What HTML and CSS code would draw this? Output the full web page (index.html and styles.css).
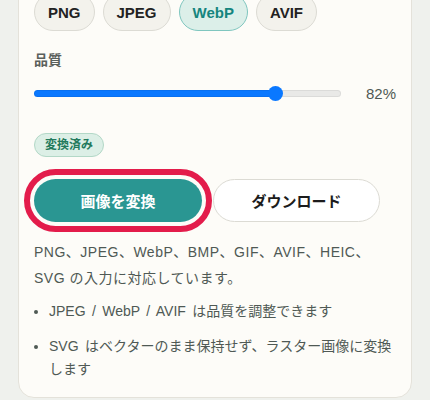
FILE: index.html
```html
<!DOCTYPE html>
<html lang="ja">
<head>
    <meta charset="UTF-8">
    <meta name="viewport" content="width=device-width, initial-scale=1.0">
    <title>画像変換</title>
    <link rel="stylesheet" href="styles.css">
</head>
<body>
    <div class="panel">
        <div class="formats">
            <button class="chip">PNG</button>
            <button class="chip">JPEG</button>
            <button class="chip active">WebP</button>
            <button class="chip">AVIF</button>
        </div>

        <div class="quality">
            <label class="field-label" for="quality">品質</label>
            <div class="slider-row">
                <input type="range" id="quality" min="10" max="100" value="82" style="--fill: 79%">
                <span class="slider-value">82%</span>
            </div>
        </div>

        <span class="badge">変換済み</span>

        <div class="actions">
            <button class="btn btn-primary">画像を変換</button>
            <button class="btn btn-secondary">ダウンロード</button>
        </div>

        <p class="note">PNG、JPEG、WebP、BMP、GIF、AVIF、HEIC、SVG の入力に対応しています。</p>
        <ul class="hints">
            <li>JPEG / WebP / AVIF は品質を調整できます</li>
            <li>SVG はベクターのまま保持せず、ラスター画像に変換します</li>
        </ul>
    </div>
</body>
</html>
```

FILE: styles.css
```css
/* ベース */
html, body {
    margin: 0;
    padding: 0;
}

body {
    background: #eff1ed;
    font-family: "Liberation Sans", "Noto Sans CJK JP", sans-serif;
    color: #4f5954;
    overflow: hidden;
}

/* カード */
.panel {
    width: 394px;
    box-sizing: border-box;
    margin: -30px 0 0 18px;
    padding: 22px 15px 16px 15px;
    background: #fdfcf8;
    border: 1px solid #e4e2da;
    border-radius: 0 0 16px 16px;
}

/* 形式の選択 */
.formats {
    display: flex;
    gap: 8px;
}

.chip {
    height: 38px;
    padding: 0 13px;
    font-family: inherit;
    font-size: 15px;
    font-weight: bold;
    color: #222;
    background: #f3f2ec;
    border: 1px solid #dcdbd4;
    border-radius: 19px;
}

.chip.active {
    color: #15857e;
    background: #dcefe9;
    border-color: #7fc6bf;
}

/* 品質 */
.quality {
    margin-top: 20px;
}

.field-label {
    display: block;
    font-size: 14px;
    font-weight: bold;
    line-height: 18px;
    color: #5a605c;
}

.slider-row {
    display: flex;
    align-items: center;
    height: 22px;
    margin-top: 13px;
}

.slider-row input {
    flex: 1;
    margin: 0;
    height: 7px;
    -webkit-appearance: none;
    appearance: none;
    border-radius: 4px;
    background: linear-gradient(to right, #0a78ff 0 var(--fill), #e9e9e7 var(--fill));
    box-shadow: inset 0 0 0 1px rgba(0, 0, 0, 0.06);
}

.slider-row input::-webkit-slider-thumb {
    -webkit-appearance: none;
    width: 15px;
    height: 15px;
    border-radius: 50%;
    background: #0a78ff;
    border: none;
}

.slider-value {
    width: 55px;
    text-align: right;
    font-size: 15px;
}

/* ステータス */
.badge {
    display: inline-block;
    margin-top: 29px;
    padding: 0 10px;
    height: 22px;
    line-height: 22px;
    font-size: 12px;
    font-weight: bold;
    color: #237a5c;
    background: #dcefe6;
    border: 1px solid #b3d8c7;
    border-radius: 12px;
}

/* ボタン */
.actions {
    display: flex;
    gap: 11px;
    margin-top: 22px;
}

.btn {
    height: 43px;
    width: 168px;
    font-family: inherit;
    font-size: 15px;
    font-weight: bold;
    border-radius: 22px;
    cursor: pointer;
}

.btn-primary {
    color: #fff;
    background: #2a9692;
    border: none;
    outline: 6px solid #e31c4b;
    outline-offset: 4px;
}

.btn-secondary {
    width: 167px;
    color: #1c1c1c;
    background: #fff;
    border: 1px solid #dcdbd4;
}

/* 説明 */
.note,
.hints {
    font-size: 14px;
}

.note {
    margin: 17px 0 0 0;
    line-height: 26px;
    letter-spacing: 0.5px;
}

.hints {
    margin: 9px 0 0 0;
    padding-left: 15px;
    line-height: 23px;
    word-spacing: 2.5px;
}

.hints li + li {
    margin-top: 12px;
}
```
